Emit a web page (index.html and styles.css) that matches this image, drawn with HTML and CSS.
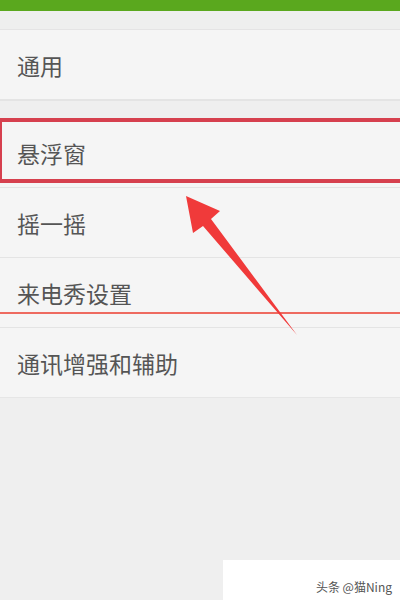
FILE: index.html
```html
<!DOCTYPE html>
<html lang="zh">
<head>
<meta charset="utf-8">
<link rel="stylesheet" href="styles.css">
</head>
<body>
<div class="screen">
  <div class="topbar"></div>
  <div class="gap gap-top"></div>
  <div class="group">
    <div class="row">通用</div>
  </div>
  <div class="gap gap-mid"></div>
  <div class="group">
    <div class="row">悬浮窗</div>
    <div class="row">摇一摇</div>
    <div class="row">来电秀设置</div>
    <div class="row last">通讯增强和辅助</div>
  </div>
  <div class="highlight"></div>
  <div class="underline"></div>
  <svg class="arrow" width="400" height="600" viewBox="0 0 400 600">
    <polygon points="186,196 220,211 211,219 297,335 203,226 193,233" fill="#f03a3a"/>
  </svg>
  <div class="watermark"><span>头条 @猫Ning</span></div>
</div>
</body>
</html>
```
FILE: styles.css
```css
* { box-sizing: border-box; }
html, body { margin: 0; padding: 0; }
body {
  width: 400px;
  height: 600px;
  overflow: hidden;
  background: #efefef;
  font-family: "Noto Sans CJK SC", "Noto Sans", sans-serif;
}
.screen {
  position: relative;
  width: 400px;
  height: 600px;
  background: #efefef;
}
.topbar {
  height: 11px;
  background: #5aa81e;
}
.gap-top {
  height: 19px;
  background: #eeefee;
  border-bottom: 1px solid #e4e4e4;
}
.gap-mid {
  height: 18px;
  background: #efefef;
  border-top: 1px solid #e4e4e4;
}
.group {
  background: #f5f5f5;
}
.row {
  height: 70px;
  display: flex;
  align-items: center;
  padding-left: 17px;
  font-size: 23px;
  color: #555555;
  border-bottom: 1px solid #e4e4e4;
}
.group:first-of-type .row { border-bottom: none; }
.row.last { border-bottom: 1px solid #e6e6e6; }
.highlight {
  position: absolute;
  left: 0;
  top: 118px;
  width: 400px;
  height: 65px;
  border-top: 4px solid #d6404e;
  border-bottom: 4px solid #d6404e;
  border-left: 2px solid #d6404e;
}
.underline {
  position: absolute;
  left: 0;
  top: 312px;
  width: 400px;
  height: 2px;
  background: #ee6a60;
}
.arrow {
  position: absolute;
  left: 0;
  top: 0;
}
.watermark {
  position: absolute;
  left: 223px;
  top: 560px;
  width: 177px;
  height: 40px;
  background: #ffffff;
  display: flex;
  align-items: center;
  justify-content: flex-end;
  padding-right: 8px;
  font-size: 12px;
  color: #555;
}
.watermark span { margin-top: 12px; }
```
